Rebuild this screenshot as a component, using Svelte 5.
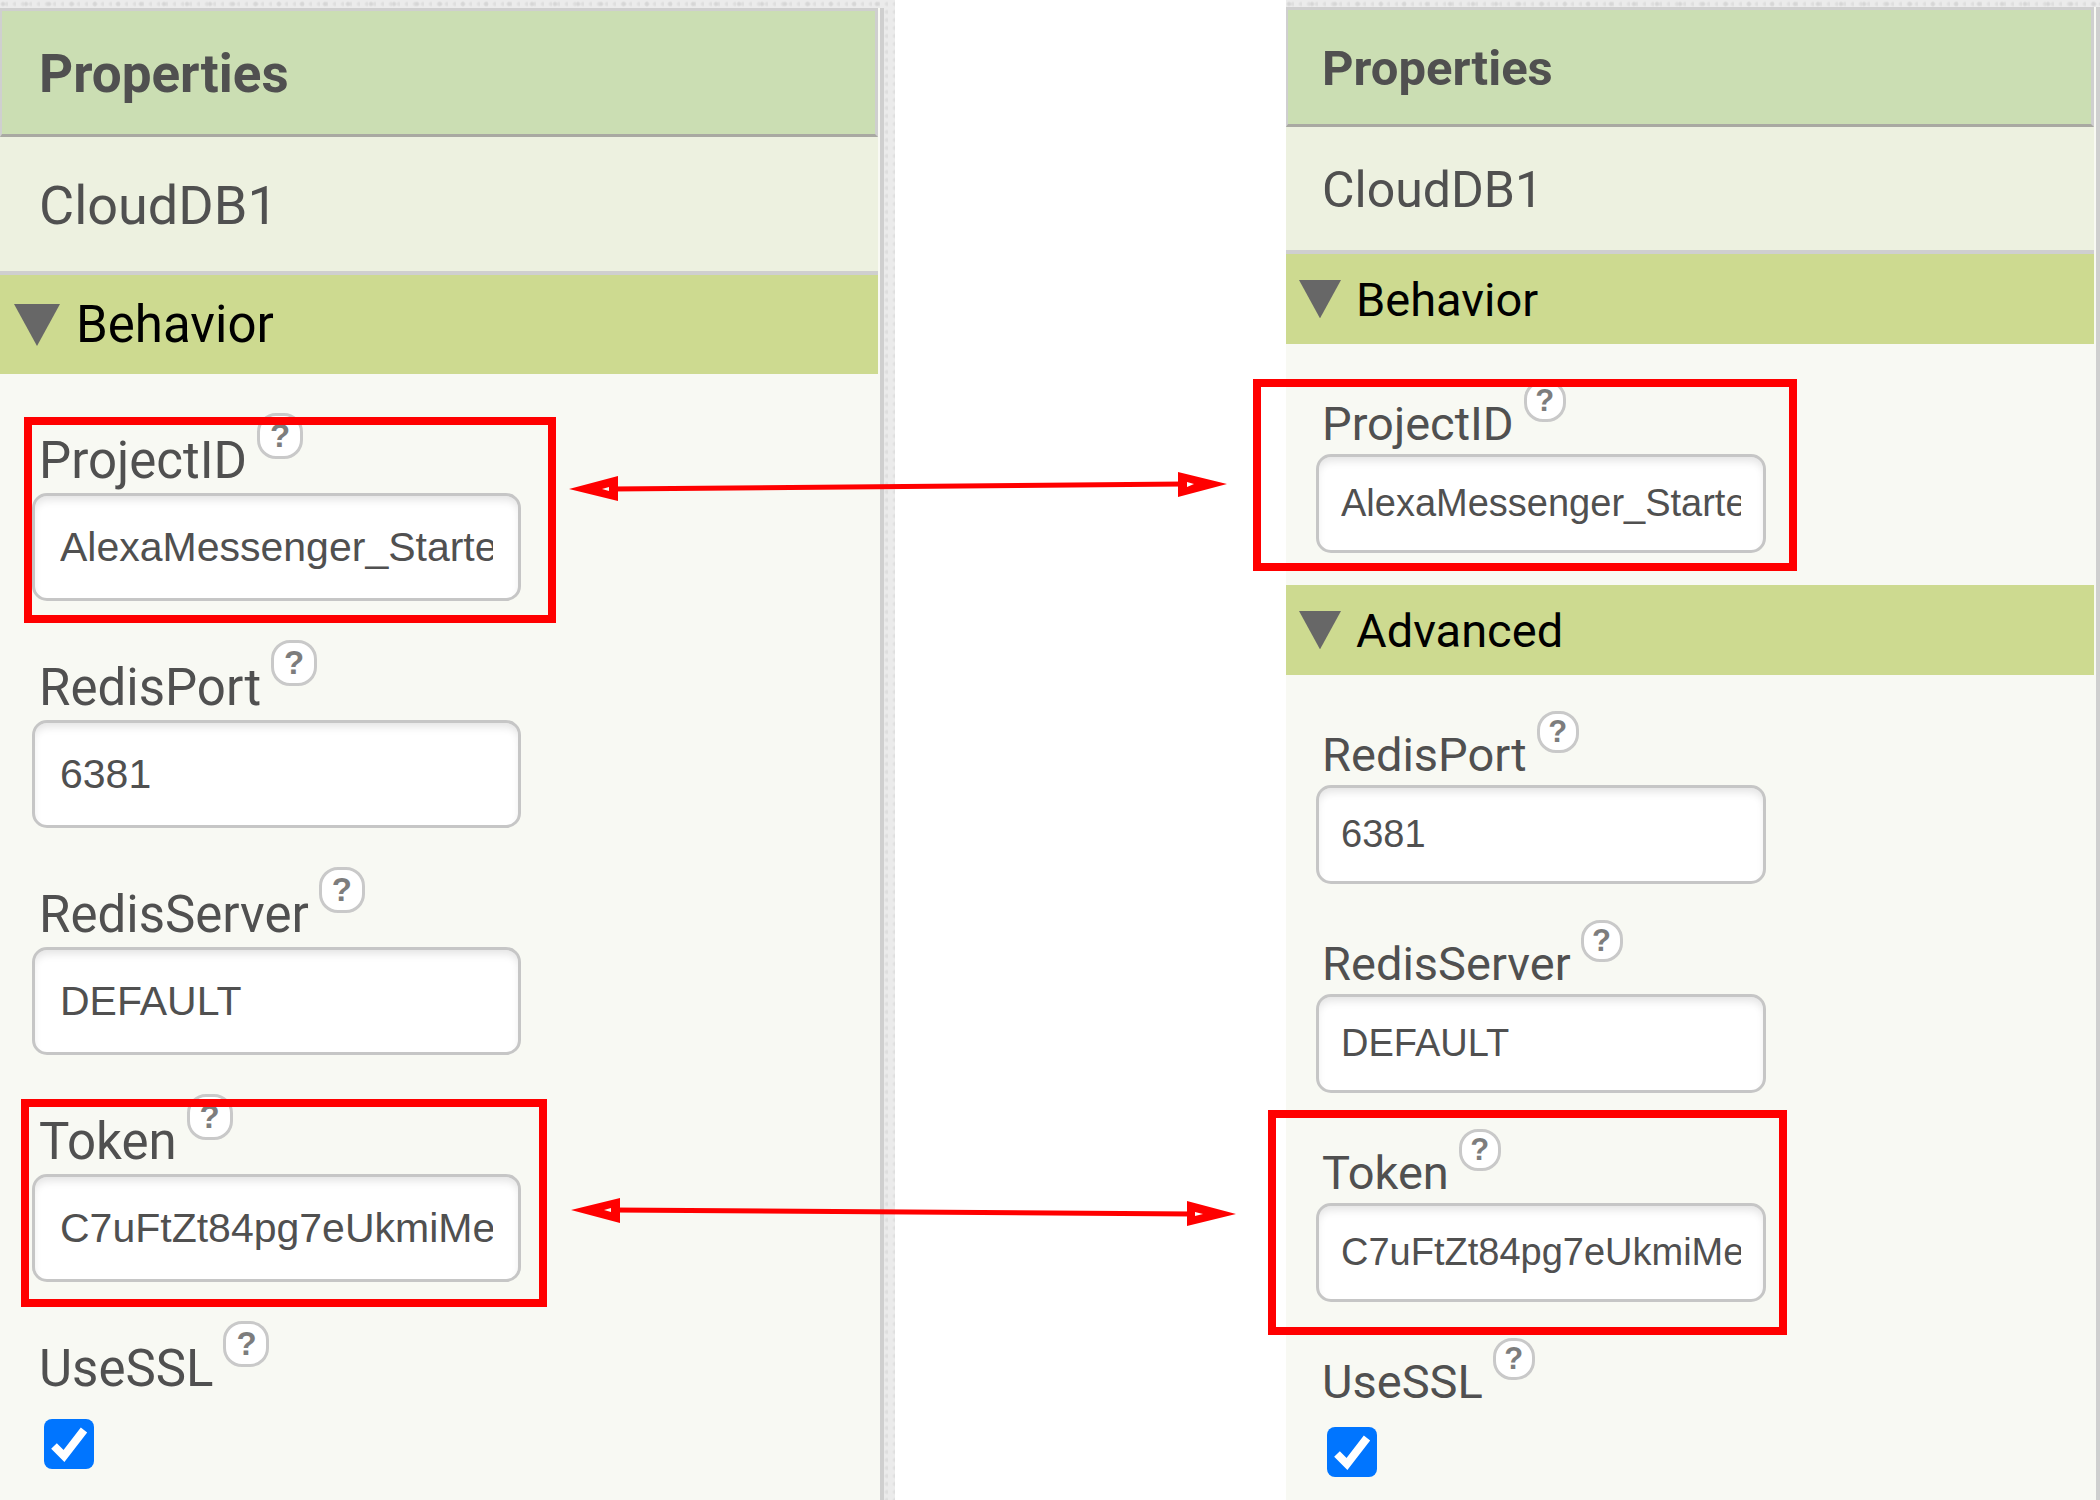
<script>
  const project = { id: 'project', label: 'ProjectID', value: 'AlexaMessenger_Starte', marked: true };
  const port = { id: 'port', label: 'RedisPort', value: '6381' };
  const server = { id: 'server', label: 'RedisServer', value: 'DEFAULT' };
  const token = { id: 'token', label: 'Token', value: 'C7uFtZt84pg7eUkmiMe', marked: true };
  const ssl = { id: 'ssl', label: 'UseSSL', checked: true };

  const panels = [
    { size: 'large', groups: [{ title: 'Behavior', fields: [project, port, server, token, ssl] }] },
    {
      size: 'small',
      groups: [
        { title: 'Behavior', fields: [project] },
        { title: 'Advanced', fields: [port, server, token, ssl] }
      ]
    }
  ];
</script>

<main>
  {#each panels as panel}
    <section class="frame {panel.size}">
      <div class="panel">
        <h1>Properties</h1>
        <h2>CloudDB1</h2>
        {#each panel.groups as group}
          <button class="group" type="button">
            <svg class="caret" viewBox="0 0 46 42" aria-hidden="true"><path d="M0 0H46L23 42Z" /></svg>
            {group.title}
          </button>
          <div class="fields">
            {#each group.fields as field}
              <div class="field">
                <div class="caption">
                  <label for="{panel.size}-{field.id}">{field.label}</label>
                  <button class="help" type="button" aria-label="Help for {field.label}">?</button>
                </div>
                {#if field.checked}
                  <span class="tick">
                    <input id="{panel.size}-{field.id}" type="checkbox" checked />
                    <svg viewBox="0 0 50 50" aria-hidden="true"><path d="M10 27L20 37L40 11" /></svg>
                  </span>
                {:else}
                  <input class="text" id="{panel.size}-{field.id}" type="text" value={field.value} />
                {/if}
                {#if field.marked}
                  <span class="mark {field.id}"></span>
                {/if}
              </div>
            {/each}
          </div>
        {/each}
      </div>
    </section>
  {/each}

  <svg class="arrows" viewBox="0 0 2100 1500" aria-hidden="true">
    <path class="line" d="M612 489L1184 484M614 1210L1192 1214" />
    <path class="head" d="M569 489L618 476V501ZM602 489L609 491V487Z" />
    <path class="head" d="M1227 484L1178 472V497ZM1194 484L1187 482V487Z" />
    <path class="head" d="M571 1210L620 1198V1223ZM604 1210L611 1212V1208Z" />
    <path class="head" d="M1236 1214L1187 1201V1226ZM1203 1214L1195 1212V1216Z" />
  </svg>
</main>

<style>
  :global(body) {
    margin: 0;
    background: #fff;
  }
  main {
    position: relative;
    display: grid;
    grid-template-columns: 895fr 814fr;
    column-gap: 391px;
    min-height: 100vh;
    font-family: Roboto, "Liberation Sans", sans-serif;
    color: #505050;
  }
  .frame {
    box-sizing: border-box;
    background-color: #ebebeb;
    background-image:
      radial-gradient(circle at 3px 4px, #d6d6d6 1px, transparent 3px),
      radial-gradient(circle at 7px 4px, #dedede 1px, transparent 3px);
    background-size: 23px 8px, 8px 8px;
  }
  .large {
    --title: 53px;
    --name: 54px;
    --text: 51px;
    --value: 41px;
    --inset: 39px;
    --edge: 32px;
    --title-h: 123px;
    --name-h: 134px;
    --group-h: 99px;
    --group-pad: 14px;
    --group-gap: 16px;
    --caret: 46px;
    --pad-top: 39px;
    --pad-bottom: 30px;
    --field-gap: 39px;
    --caption-h: 80px;
    --label-top: 18px;
    --label-line: 60px;
    --icon: 46px;
    --icon-text: 33px;
    --input-w: 489px;
    --input-h: 108px;
    --input-pad: 25px;
    --tick-top: 18px;
    padding: 8px 11px 0 0;
  }
  .small {
    --title: 49px;
    --name: 50px;
    --text: 47px;
    --value: 38px;
    --inset: 36px;
    --edge: 30px;
    --title-h: 114px;
    --name-h: 123px;
    --group-h: 90px;
    --group-pad: 13px;
    --group-gap: 15px;
    --caret: 42px;
    --pad-top: 36px;
    --pad-bottom: 32px;
    --field-gap: 36px;
    --caption-h: 74px;
    --label-top: 17px;
    --label-line: 54px;
    --icon: 42px;
    --icon-text: 31px;
    --input-w: 450px;
    --input-h: 99px;
    --input-pad: 22px;
    --tick-top: 15px;
    padding: 7px 0 0;
  }
  .panel {
    box-sizing: border-box;
    height: 100%;
    padding-right: 2px;
    border-right: 4px solid #cfcfcf;
    background: #f8f9f3;
  }
  h1,
  h2 {
    display: flex;
    align-items: center;
    box-sizing: content-box;
    margin: 0;
    padding: 2px 0 0 var(--inset);
  }
  h1 {
    height: calc(var(--title-h) - 2px);
    padding-left: calc(var(--inset) - 2px);
    border: solid #cfcfcf;
    border-width: 3px 3px 3px 2px;
    border-bottom-color: #a9a9a2;
    background: #cbdeb3;
    font-size: var(--title);
    font-weight: 700;
  }
  h2 {
    height: calc(var(--name-h) - 2px);
    border-bottom: 4px solid #cfcfcf;
    background: #edf1e0;
    font-size: var(--name);
    font-weight: 400;
  }
  .group {
    display: flex;
    align-items: center;
    gap: var(--group-gap);
    width: 100%;
    height: var(--group-h);
    padding: 0 var(--group-pad);
    border: 0;
    background: #cdda90;
    color: #000;
    font: 400 var(--text) Roboto, "Liberation Sans", sans-serif;
  }
  .caret {
    width: var(--caret);
    fill: #676767;
  }
  .fields {
    display: flex;
    flex-direction: column;
    gap: var(--field-gap);
    padding: var(--pad-top) 0 var(--pad-bottom) var(--edge);
  }
  .field {
    position: relative;
  }
  .caption {
    display: flex;
    align-items: flex-start;
    gap: 10px;
    height: var(--caption-h);
    padding-left: calc(var(--inset) - var(--edge));
  }
  label {
    padding-top: var(--label-top);
    font-size: var(--text);
    line-height: var(--label-line);
  }
  .help {
    display: flex;
    align-items: center;
    justify-content: center;
    width: var(--icon);
    height: var(--icon);
    padding: 0;
    border: 3px solid #c9c9c9;
    border-radius: 19px;
    background: #fff;
    color: #7d7d7d;
    font: 700 var(--icon-text) "Liberation Sans", sans-serif;
  }
  .text {
    display: block;
    box-sizing: border-box;
    width: var(--input-w);
    height: var(--input-h);
    padding: 0 var(--input-pad);
    border: 3px solid #c6c6c6;
    border-radius: 15px;
    background: #fff;
    box-shadow: inset 0 6px 8px -2px #e4e4e4;
    color: #505050;
    font: 400 var(--value) "Liberation Sans", Arial, sans-serif;
  }
  .tick {
    display: grid;
    width: 50px;
    margin: var(--tick-top) 0 0 calc(var(--inset) - var(--edge) + 5px);
  }
  .tick input,
  .tick svg {
    grid-area: 1 / 1;
    width: 50px;
    height: 50px;
    margin: 0;
  }
  .tick input {
    appearance: none;
    border-radius: 8px;
    background: #0075ff;
  }
  .tick svg {
    fill: none;
    stroke: #fff;
    stroke-width: 8;
    pointer-events: none;
  }
  .mark {
    position: absolute;
    box-sizing: border-box;
    border: 8px solid #f00;
    pointer-events: none;
  }
  .large .project {
    left: -8px;
    top: 4px;
    width: 532px;
    height: 206px;
  }
  .large .token {
    left: -11px;
    top: 5px;
    width: 526px;
    height: 208px;
  }
  .small .project {
    left: -63px;
    top: -1px;
    width: 544px;
    height: 192px;
  }
  .small .token {
    left: -48px;
    top: -19px;
    width: 519px;
    height: 225px;
  }
  .arrows {
    position: absolute;
    top: 0;
    left: 0;
    width: 100%;
    pointer-events: none;
  }
  .line {
    fill: none;
    stroke: #f00;
    stroke-width: 5;
  }
  .head {
    fill: #f00;
    fill-rule: evenodd;
  }
</style>
